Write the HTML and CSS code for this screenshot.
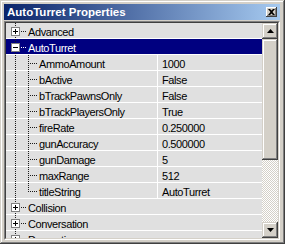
FILE: index.html
```html
<!DOCTYPE html>
<html>
<head>
<meta charset="utf-8">
<link rel="stylesheet" href="styles.css">
</head>
<body>
<div class="window">
  <div class="titlebar">
    <span class="title">AutoTurret Properties</span>
    <span class="close"><svg width="7" height="6" viewBox="0 0 7 6"><path d="M0 0h2l1.5 1.5L5 0h2L4.5 3 7 6H5L3.5 4.5 2 6H0l2.5-3z" fill="#000"/></svg></span>
  </div>
  <div class="list">
    <div class="list-inner">
      <div class="rows">
        <div class="row cat">
          <svg class="tree" width="22" height="16" viewBox="0 0 22 16"><path class="dot" d="M9.5 0V16M15 8.5H20"/><rect class="box" x="5.5" y="4.5" width="8" height="8"/><path class="sign" d="M7 8.5H12M9.5 6V11"/></svg>
          <span class="label">Advanced</span>
        </div>
        <div class="row cat sel">
          <svg class="tree" width="22" height="16" viewBox="0 0 22 16"><path class="dot" d="M9.5 0V16"/><path class="dot light" d="M15 8.5H20"/><rect class="box" x="5.5" y="4.5" width="8" height="8"/><path class="sign" d="M7 8.5H12"/></svg>
          <span class="label">AutoTurret</span>
        </div>
        <div class="row prop">
          <span class="name"><svg class="tree" width="33" height="16" viewBox="0 0 33 16"><path class="dot" d="M9.5 0V16M22.5 0V16M24 8.5H32"/></svg><span class="label">AmmoAmount</span></span>
          <span class="val">1000</span>
        </div>
        <div class="row prop">
          <span class="name"><svg class="tree" width="33" height="16" viewBox="0 0 33 16"><path class="dot" d="M9.5 0V16M22.5 0V16M24 8.5H32"/></svg><span class="label">bActive</span></span>
          <span class="val">False</span>
        </div>
        <div class="row prop">
          <span class="name"><svg class="tree" width="33" height="16" viewBox="0 0 33 16"><path class="dot" d="M9.5 0V16M22.5 0V16M24 8.5H32"/></svg><span class="label">bTrackPawnsOnly</span></span>
          <span class="val">False</span>
        </div>
        <div class="row prop">
          <span class="name"><svg class="tree" width="33" height="16" viewBox="0 0 33 16"><path class="dot" d="M9.5 0V16M22.5 0V16M24 8.5H32"/></svg><span class="label">bTrackPlayersOnly</span></span>
          <span class="val">True</span>
        </div>
        <div class="row prop">
          <span class="name"><svg class="tree" width="33" height="16" viewBox="0 0 33 16"><path class="dot" d="M9.5 0V16M22.5 0V16M24 8.5H32"/></svg><span class="label">fireRate</span></span>
          <span class="val">0.250000</span>
        </div>
        <div class="row prop">
          <span class="name"><svg class="tree" width="33" height="16" viewBox="0 0 33 16"><path class="dot" d="M9.5 0V16M22.5 0V16M24 8.5H32"/></svg><span class="label">gunAccuracy</span></span>
          <span class="val">0.500000</span>
        </div>
        <div class="row prop">
          <span class="name"><svg class="tree" width="33" height="16" viewBox="0 0 33 16"><path class="dot" d="M9.5 0V16M22.5 0V16M24 8.5H32"/></svg><span class="label">gunDamage</span></span>
          <span class="val">5</span>
        </div>
        <div class="row prop">
          <span class="name"><svg class="tree" width="33" height="16" viewBox="0 0 33 16"><path class="dot" d="M9.5 0V16M22.5 0V16M24 8.5H32"/></svg><span class="label">maxRange</span></span>
          <span class="val">512</span>
        </div>
        <div class="row prop">
          <span class="name"><svg class="tree" width="33" height="16" viewBox="0 0 33 16"><path class="dot" d="M9.5 0V16M22.5 0V9M24 8.5H32"/></svg><span class="label">titleString</span></span>
          <span class="val">AutoTurret</span>
        </div>
        <div class="row cat">
          <svg class="tree" width="22" height="16" viewBox="0 0 22 16"><path class="dot" d="M9.5 0V16M15 8.5H20"/><rect class="box" x="5.5" y="4.5" width="8" height="8"/><path class="sign" d="M7 8.5H12M9.5 6V11"/></svg>
          <span class="label">Collision</span>
        </div>
        <div class="row cat">
          <svg class="tree" width="22" height="16" viewBox="0 0 22 16"><path class="dot" d="M9.5 0V16M15 8.5H20"/><rect class="box" x="5.5" y="4.5" width="8" height="8"/><path class="sign" d="M7 8.5H12M9.5 6V11"/></svg>
          <span class="label">Conversation</span>
        </div>
        <div class="row cat">
          <svg class="tree" width="22" height="16" viewBox="0 0 22 16"><path class="dot" d="M9.5 0V16M15 8.5H20"/><rect class="box" x="5.5" y="4.5" width="8" height="8"/><path class="sign" d="M7 8.5H12M9.5 6V11"/></svg>
          <span class="label">Decoration</span>
        </div>
      </div>
      <div class="scrollbar">
        <span class="sbtn"><svg width="7" height="4" viewBox="0 0 7 4"><path d="M3.5 0L7 4H0z" fill="#000"/></svg></span>
        <span class="thumb"></span>
        <span class="track"></span>
        <span class="sbtn"><svg width="7" height="4" viewBox="0 0 7 4"><path d="M0 0h7L3.5 4z" fill="#000"/></svg></span>
      </div>
    </div>
  </div>
</div>
</body>
</html>
```

FILE: styles.css
```css
html, body {
  margin: 0;
  padding: 0;
  background: #d4d0c8;
}

.window {
  box-sizing: border-box;
  width: 285px;
  height: 244px;
  padding: 4px 5px 4px 4px;
  background: #d4d0c8;
  box-shadow: inset -1px -1px #404040, inset 1px 1px #d4d0c8, inset -2px -2px #808080, inset 2px 2px #fff;
  display: flex;
  flex-direction: column;
  font-family: "Liberation Sans", Arial, sans-serif;
  font-size: 11px;
}

.titlebar {
  height: 16px;
  flex: none;
  display: flex;
  align-items: center;
  background: linear-gradient(to right, #0a246a, #a6caf0);
  color: #fff;
  margin-bottom: 1px;
}

.title {
  flex: 1;
  font-weight: bold;
  font-size: 11.5px;
  line-height: 16px;
  padding-left: 3px;
  white-space: nowrap;
}

.close {
  box-sizing: border-box;
  width: 11px;
  height: 10px;
  margin-right: 3px;
  background: #d4d0c8;
  box-shadow: inset -1px -1px #404040, inset 1px 1px #fff, inset -2px -2px #808080;
  display: flex;
  align-items: center;
  justify-content: center;
}

.close svg {
  display: block;
}

.list {
  flex: 1;
  border: 1px solid;
  border-color: #808080 #fff #fff #808080;
  display: flex;
  min-height: 0;
}

.list-inner {
  flex: 1;
  border: 1px solid;
  border-color: #404040 #d4d0c8 #d4d0c8 #404040;
  display: flex;
  overflow: hidden;
  min-height: 0;
}

.rows {
  flex: 1;
  overflow: hidden;
}

.row {
  height: 16px;
  display: flex;
  background: linear-gradient(to bottom, #e0e0e0 15px, #fff 15px);
  color: #000;
  white-space: nowrap;
  letter-spacing: -0.4px;
}

.row.sel {
  background: linear-gradient(to bottom, #000080 15px, #fff 15px);
  color: #fff;
}

.tree {
  display: block;
  flex: none;
}

.dot {
  fill: none;
  stroke: #1a1a1a;
  stroke-width: 1;
  stroke-dasharray: 1 1;
  shape-rendering: crispEdges;
}

.dot.light {
  stroke: #fff;
}

.box {
  fill: #fff;
  stroke: #808080;
  shape-rendering: crispEdges;
}

.sign {
  fill: none;
  stroke: #000;
  shape-rendering: crispEdges;
}

.label {
  line-height: 16px;
  padding-top: 1px;
  height: 15px;
}

.name {
  width: 151px;
  flex: none;
  display: flex;
  border-right: 1px solid #fff;
  overflow: hidden;
}

.val {
  padding-left: 4px;
  line-height: 16px;
  padding-top: 1px;
  height: 15px;
}

.scrollbar {
  width: 16px;
  flex: none;
  display: flex;
  flex-direction: column;
}

.sbtn {
  box-sizing: border-box;
  height: 16px;
  flex: none;
  background: #d4d0c8;
  box-shadow: inset -1px -1px #404040, inset 1px 1px #d4d0c8, inset -2px -2px #808080, inset 2px 2px #fff;
  display: flex;
  align-items: center;
  justify-content: center;
}

.sbtn svg {
  display: block;
}

.thumb {
  height: 121px;
  flex: none;
  background: #d4d0c8;
  box-shadow: inset -1px -1px #404040, inset 1px 1px #d4d0c8, inset -2px -2px #808080, inset 2px 2px #fff;
}

.track {
  flex: 1;
  background-color: #d4d0c8;
  background-image: conic-gradient(#fff 25%, #d4d0c8 0 50%, #fff 0 75%, #d4d0c8 0);
  background-size: 2px 2px;
}
```
